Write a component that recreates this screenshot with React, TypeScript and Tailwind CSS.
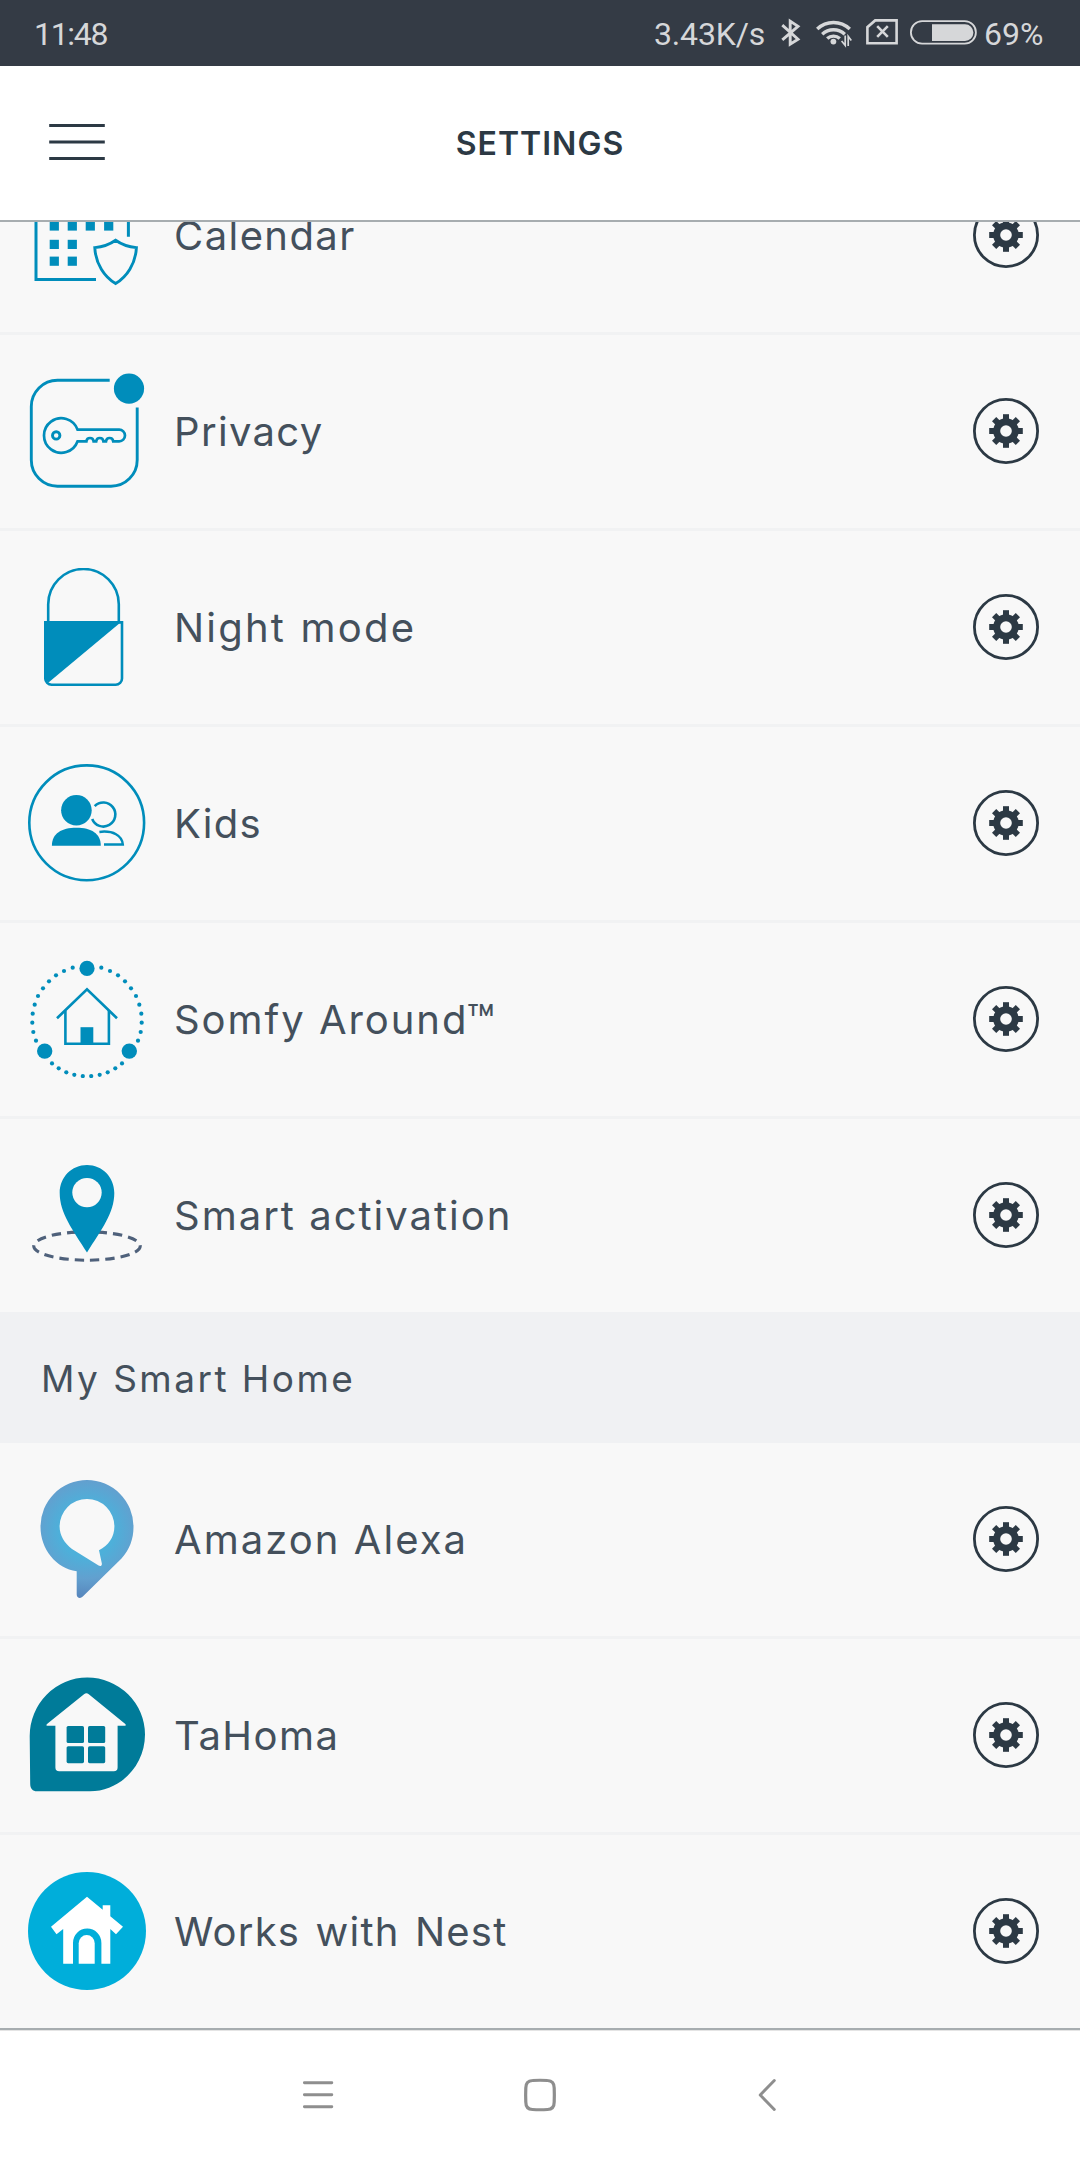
import type { ReactNode } from "react";

const BLUE = "#008dbb";

function Icon({ top, children }: { top: number; children: ReactNode }) {
  return (
    <svg
      className="ml-7 h-[118px] w-[118px] shrink-0"
      viewBox={`28 ${top} 118 118`}
      fill="none"
      stroke={BLUE}
      strokeWidth="2.9"
    >
      {children}
    </svg>
  );
}

function CalendarIcon() {
  return (
    <Icon top={176}>
      <path d="M36 190V279.6H96M36 190H128.4V236.7" strokeWidth="3" />
      <g fill={BLUE} stroke="none">
        {[54.3, 72.3, 90.3, 108.7].map((x) => (
          <rect key={x} x={x - 4.6} y="221.4" width="9.2" height="9.2" />
        ))}
        {[54.3, 72.3].map((x) => (
          <rect key={x} x={x - 4.6} y="239.8" width="9.2" height="9.2" />
        ))}
        {[54.3, 72.3].map((x) => (
          <rect key={x} x={x - 4.6} y="256.6" width="9.2" height="9.2" />
        ))}
      </g>
      <path d="M115.6 240.2C109.5 244.5 101.5 247 94.8 247.6C95.6 264 104.5 277 115.6 283.6C126.7 277 135.6 264 136.4 247.6C129.7 247 121.7 244.5 115.6 240.2Z" />
    </Icon>
  );
}

function PrivacyIcon() {
  return (
    <Icon top={372}>
      <path d="M109.7 380.3H57.5A26.2 26.2 0 0 0 31.3 406.5V460A26.2 26.2 0 0 0 57.5 486.2H111A26.2 26.2 0 0 0 137.2 460V407.4" />
      <circle cx="129" cy="388.6" r="15.1" fill={BLUE} stroke="none" />
      <path d="M77.6 429.7H119.2A5.8 5.8 0 0 1 119.2 441.3H113.2C112.6 436.9 106.6 436.9 106 441.3H103.4C102.8 436.9 96.8 436.9 96.2 441.3H93.6C93 436.9 87 436.9 86.4 441.3H77.6A17.3 17.3 0 1 1 77.6 429.7Z" strokeWidth="2.7" />
      <circle cx="56.2" cy="435.4" r="3.7" />
    </Icon>
  );
}

function NightIcon() {
  return (
    <Icon top={568}>
      <path d="M48.2 622V604.3A35.3 35.3 0 0 1 118.8 604.3V622" strokeWidth="2.6" />
      <path d="M45.3 622.4H122V678.4A6.3 6.3 0 0 1 115.7 684.7H51.6A6.3 6.3 0 0 1 45.3 678.4Z" strokeWidth="2.6" />
      <path d="M44.2 621.2H122L48.5 682.6L44.8 680Z" fill={BLUE} stroke="none" />
    </Icon>
  );
}

function KidsIcon() {
  return (
    <Icon top={764}>
      <circle cx="86.7" cy="822.8" r="57.4" strokeWidth="2.6" />
      <g fill={BLUE} stroke="none">
        <circle cx="76.4" cy="810.3" r="15.3" />
        <path d="M51.9 845.7C51.9 833.5 61.5 827.8 76.4 827.8S100.8 833.5 100.8 845.7Z" />
      </g>
      <path d="M94.7 806.2A12 12 0 1 1 92.2 819" strokeWidth="2.6" />
      <path d="M99.4 831.9C113 830.3 122.2 835.5 122.8 844.6H104" strokeWidth="2.5" />
    </Icon>
  );
}

const ringDots: [number, number][] = [
  [14.3, 967.7], [23, 971], [31, 975.3], [38, 981.3], [44, 988.3], [49, 996],
  [52.3, 1004.7], [54.3, 1013.7], [54.7, 1022.7], [53.7, 1032], [51, 1040.7],
  [35, 1063.4], [28.3, 1068.3], [20.7, 1072.3], [12.7, 1074.8], [4.2, 1076.1],
];

function AroundIcon() {
  return (
    <Icon top={960}>
      <g fill={BLUE} stroke="none">
        {ringDots.map(([dx, y]) => (
          <circle key={`r${y}`} cx={87 + dx} cy={y} r="2.1" />
        ))}
        {ringDots.map(([dx, y]) => (
          <circle key={`l${y}`} cx={87 - dx} cy={y} r="2.1" />
        ))}
        <circle cx="87" cy="968.4" r="7.6" />
        <circle cx="44.7" cy="1051.1" r="7.7" />
        <circle cx="129.3" cy="1051.1" r="7.7" />
        <rect x="80.5" y="1027.2" width="12.8" height="17" />
      </g>
      <path d="M57 1018.3L87 989.4L117 1018.3" strokeWidth="2.6" />
      <path d="M65.4 1010.5V1043.7H108.9V1010.5" strokeWidth="2.6" />
    </Icon>
  );
}

function PinIcon() {
  return (
    <Icon top={1156}>
      <path
        d="M87 1260.2A53.4 14.2 0 0 1 87 1231.8A53.4 14.2 0 0 1 87 1260.2"
        pathLength="231"
        stroke="#4f617b"
        strokeWidth="3.1"
        strokeDasharray="9.4 6"
        strokeDashoffset="-3"
      />
      <path
        d="M87 1165C102.3 1165 114.3 1177.3 114.3 1193C114.3 1213 101.5 1229.5 87 1252.4C72.5 1229.5 59.7 1213 59.7 1193C59.7 1177.3 71.7 1165 87 1165Z"
        fill={BLUE}
        stroke="none"
      />
      <circle cx="87" cy="1192.6" r="14.7" fill="#f8f8f8" stroke="none" />
    </Icon>
  );
}

function AlexaIcon() {
  return (
    <Icon top={1480}>
      <defs>
        <radialGradient id="alexa" gradientUnits="userSpaceOnUse" cx="87" cy="1530" r="72">
          <stop offset="0.38" stopColor="#4db0da" />
          <stop offset="0.68" stopColor="#62a0cf" />
          <stop offset="1" stopColor="#5580b8" />
        </radialGradient>
      </defs>
      <path
        fill="url(#alexa)"
        stroke="none"
        fillRule="evenodd"
        d="M87 1480A46.5 46.7 0 0 1 133.5 1526.7C133.5 1539 129.5 1549.5 121.5 1558.5L82.8 1596.6C80 1599.2 76.7 1597.6 76.7 1594.5V1571.3C56 1568 40.5 1549.5 40.5 1526.7A46.5 46.7 0 0 1 87 1480ZM87 1499A27.4 27.6 0 0 0 59.6 1526.6C59.6 1535.5 64.5 1543.5 72 1549L98.6 1565.6C100.6 1566.7 102.2 1565.6 101.8 1563.2L99 1550.2C108.5 1545.8 114.4 1537 114.4 1526.6A27.4 27.6 0 0 0 87 1499Z"
      />
    </Icon>
  );
}

function TahomaIcon() {
  return (
    <Icon top={1676}>
      <g stroke="none">
        <path
          fill="#007b99"
          d="M87.3 1677.6A57.7 57 0 0 1 145 1734.6C145 1766 120 1791.3 90 1791.3H37C32.6 1791.3 30.2 1788.5 30.2 1784L29.7 1736A57.6 58.4 0 0 1 87.3 1677.6Z"
        />
        <path
          fill="#f8f8f8"
          d="M84 1694.2Q86.4 1692.2 88.8 1694.2L125.3 1724Q126.6 1725.8 124.5 1725.8H117.6V1767.5Q117.6 1771.3 113.8 1771.3H59.2Q55.4 1771.3 55.4 1767.5V1725.8H47.6Q45.6 1725.8 47 1724Z"
        />
        <g fill="#007b99">
          <rect x="66.6" y="1726" width="17.4" height="17" rx="1.6" />
          <rect x="88" y="1726" width="17.2" height="17" rx="1.6" />
          <rect x="66.6" y="1746.2" width="17.4" height="17" rx="1.6" />
          <rect x="88" y="1746.2" width="17.2" height="17" rx="1.6" />
        </g>
      </g>
    </Icon>
  );
}

function NestIcon() {
  return (
    <Icon top={1872}>
      <g stroke="none">
        <circle cx="87" cy="1931" r="59" fill="#00aeda" />
        <path
          fill="#fff"
          d="M87 1896.8L102.7 1909.7V1905.2H110.3V1916.2L123 1926.7L116 1934.2L110.3 1929V1963.7H101.4V1943A14.2 14.4 0 0 0 73 1943V1963.7H63.2V1929L56.5 1934.2L51 1926.7Z"
        />
        <path fill="#fff" d="M78.7 1963.7V1943.2A8 8.2 0 0 1 94.7 1943.2V1963.7Z" />
      </g>
    </Icon>
  );
}

function Gear() {
  return (
    <svg className="mr-[41px] ml-auto h-[66px] w-[66px] shrink-0" viewBox="-33 -33 66 66">
      <circle r="31.6" fill="none" stroke="#2c3944" strokeWidth="2.8" />
      <g fill="#2c3944">
        <circle r="12.8" />
        {[0, 45, 90, 135].map((a) => (
          <rect key={a} x="-3" y="-16.8" width="6" height="33.6" transform={`rotate(${a})`} />
        ))}
      </g>
      <circle r="5.8" fill="#f8f8f8" />
    </svg>
  );
}

function Row({ icon, last, children }: { icon: ReactNode; last?: boolean; children: ReactNode }) {
  return (
    <div className={last ? "h-[193px] shrink-0" : "h-[196px] shrink-0 border-b-[3px] border-[#f1f2f3]"}>
      <div className="flex h-[192px] items-center">
        {icon}
        {children}
        <Gear />
      </div>
    </div>
  );
}

export default function App() {
  return (
    <div className="flex h-[2160px] w-[1080px] flex-col overflow-hidden bg-white font-['Inter',sans-serif] text-[#44505c]">
      <div className="flex h-[66px] shrink-0 items-center bg-[#343b45] font-['Roboto',sans-serif] text-[32px] text-[#d6d7d9]">
        <span className="mt-0.5 ml-[34px] tracking-[-1.3px]">11:48</span>
        <span className="mt-0.5 ml-auto w-[122px] tracking-[-0.16px]">3.43K/s</span>
        <svg className="h-[66px] w-7" viewBox="776 0 28 66" fill="none" stroke="currentColor" strokeWidth="2.9">
          <path d="M782.3 25.2L798 39.2L790.2 44.2V21.1L798 26.3L782.3 39.8" />
        </svg>
        <svg className="h-[66px] w-[54px]" viewBox="804 0 54 66" fill="none" stroke="currentColor" strokeWidth="3.4">
          <path d="M817.2 29A23.5 23.5 0 0 1 849.8 29" />
          <path d="M822.2 34.2A16.5 16.5 0 0 1 844.8 34.2" />
          <path d="M827.2 38.6A9.2 9.2 0 0 1 839.8 38.6" />
          <circle cx="833.4" cy="41.6" r="2.9" fill="currentColor" stroke="none" />
          <path d="M845.2 35.5V45.3L841.6 41M848.2 46V36.3L851.3 40.5" strokeWidth="1.7" />
        </svg>
        <svg className="h-[66px] w-11" viewBox="858 0 44 66" fill="none" stroke="currentColor" strokeWidth="2.6">
          <path d="M875.2 20.4H896.6V43.2H867.4V27.2Z" />
          <path d="M877.2 26.2L887.8 36.8M887.8 26.2L877.2 36.8" />
        </svg>
        <svg className="h-[66px] w-[82px]" viewBox="902 0 82 66">
          <rect x="910.9" y="21.2" width="65" height="22.4" rx="11.2" fill="none" stroke="currentColor" strokeWidth="1.8" />
          <path d="M932 24.2H965A8.4 8.4 0 0 1 965 41H932Z" fill="currentColor" />
        </svg>
        <span className="mt-0.5 w-[95px]">69%</span>
        <span className="w-px" />
      </div>

      <div className="grid h-[156px] shrink-0 grid-cols-3 items-center border-b-2 border-[#a7adb0] bg-white text-[#2c3944]">
        <svg className="ml-[49px] h-[38px] w-14" viewBox="49 123.5 56 38" stroke="currentColor" strokeWidth="2.8">
          <path d="M49.2 125H104.8M49.2 141.5H104.8M49.2 158H104.8" />
        </svg>
        <h1 className="mt-0.5 text-center text-[32px] font-semibold tracking-[1.02px]">SETTINGS</h1>
      </div>

      <div className="flex h-[1806px] shrink-0 flex-col overflow-hidden bg-[#f8f8f8] text-[40px] whitespace-nowrap">
        <div className="-mt-[83px] h-0 shrink-0" />
        <Row icon={<CalendarIcon />}>
          <span className="mt-px ml-7 leading-none tracking-[1.42px]">Calendar</span>
        </Row>
        <Row icon={<PrivacyIcon />}>
          <span className="mt-px ml-7 tracking-[1.33px]">Privacy</span>
        </Row>
        <Row icon={<NightIcon />}>
          <span className="mt-px ml-7 tracking-[2.2px] [word-spacing:1px]">Night mode</span>
        </Row>
        <Row icon={<KidsIcon />}>
          <span className="mt-px ml-7 tracking-[1.24px]">Kids</span>
        </Row>
        <Row icon={<AroundIcon />}>
          <span className="mt-px ml-7 tracking-[1.95px]">
            Somfy Around<span className="relative top-1 -ml-0.5 text-[46px] leading-none">™</span>
          </span>
        </Row>
        <Row icon={<PinIcon />} last>
          <span className="mt-px ml-7 tracking-[2px]">Smart activation</span>
        </Row>
        <div className="flex h-[131px] shrink-0 items-center bg-[#f0f1f3]">
          <h2 className="mt-0.5 ml-[41px] text-[37px] tracking-[2.45px]">My Smart Home</h2>
        </div>
        <Row icon={<AlexaIcon />}>
          <span className="mt-px ml-7 tracking-[2.05px]">Amazon Alexa</span>
        </Row>
        <Row icon={<TahomaIcon />}>
          <span className="mt-px ml-7 tracking-[1.5px]">TaHoma</span>
        </Row>
        <Row icon={<NestIcon />} last>
          <span className="mt-px ml-7 tracking-[1.2px] [word-spacing:3px]">Works with Nest</span>
        </Row>
      </div>

      <div className="flex h-[132px] shrink-0 items-start border-t-2 border-[#a7adb0] bg-white text-[#8e8e8e]">
        <div className="flex w-full border-t border-[#e4e4e4] pt-[46px] pl-[302px]">
          <svg className="h-9 w-8" viewBox="302 2077 32 36" fill="none" stroke="currentColor" strokeWidth="2.9" strokeLinecap="round">
            <path d="M304.4 2082.7H331.8M304.4 2094.8H331.8M304.4 2106.8H331.8" />
          </svg>
          <svg className="ml-[189px] h-9 w-[34px]" viewBox="523 2077 34 36" fill="none" stroke="currentColor" strokeWidth="3.2">
            <path d="M525.8 2088Q525.8 2080.7 532.5 2080.5Q540 2080 547.5 2080.5Q554.2 2080.7 554.2 2088Q554.5 2095 554.2 2102Q554.2 2109.3 547.5 2109.5Q540 2110 532.5 2109.5Q525.8 2109.3 525.8 2102Q525.5 2095 525.8 2088Z" />
          </svg>
          <svg className="ml-[195px] h-9 w-8" viewBox="752 2077 32 36" fill="none" stroke="currentColor" strokeWidth="2.9" strokeLinecap="round">
            <path d="M774.3 2080.6L760.2 2095L774.3 2109.5" strokeLinejoin="round" />
          </svg>
        </div>
      </div>
    </div>
  );
}
